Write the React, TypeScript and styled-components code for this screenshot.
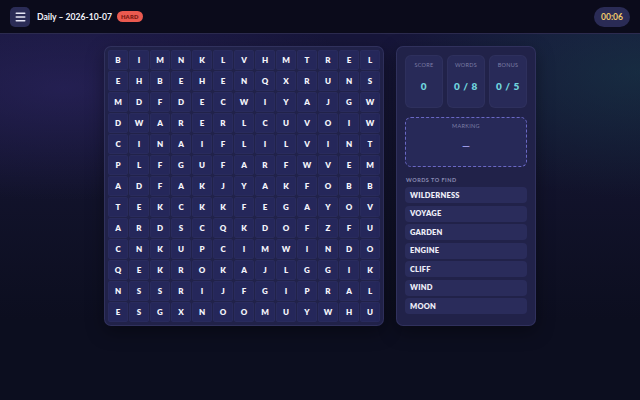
import React from 'react';
import styled, { createGlobalStyle } from 'styled-components';

const GlobalStyle = createGlobalStyle`
  html, body {
    margin: 0;
    padding: 0;
    height: 100%;
  }
  body {
    font-family: 'Lato', 'Noto Sans', sans-serif;
    background: #0c0e1f;
    color: #ffffff;
  }
  #root {
    min-height: 100%;
  }
`;

const Page = styled.div`
  width: 640px;
  height: 400px;
  overflow: hidden;
  background:
    radial-gradient(ellipse 420px 160px at 10% 22%, rgba(48, 40, 105, 0.55), transparent 70%),
    radial-gradient(ellipse 360px 180px at 100% 18%, rgba(24, 58, 72, 0.6), transparent 70%),
    linear-gradient(180deg, #17163a 9%, #12132c 45%, #0c0e1f 80%);
  display: flex;
  flex-direction: column;
`;

const Header = styled.header`
  height: 34px;
  box-sizing: border-box;
  padding: 0 10px;
  display: flex;
  align-items: center;
  justify-content: space-between;
  background: #0b0b1b;
  border-bottom: 1px solid #2c2b4f;
`;

const HeaderLeft = styled.div`
  display: flex;
  align-items: center;
  gap: 5px;
`;

const MenuButton = styled.button`
  width: 20px;
  height: 20px;
  border: none;
  border-radius: 5px;
  background: #2b2c56;
  display: flex;
  align-items: center;
  justify-content: center;
  padding: 0;
  margin-right: 2px;
`;

const Title = styled.h1`
  margin: 0;
  font-size: 8.6px;
  font-weight: 700;
  color: #f1f1f8;
`;

const Badge = styled.span`
  background: #ea5a50;
  color: #7a1812;
  font-size: 5.8px;
  font-weight: 800;
  line-height: 7px;
  padding: 2px 4px;
  border-radius: 6px;
  letter-spacing: 0.2px;
`;

const Timer = styled.div`
  background: #2a2b55;
  color: #f0c96a;
  font-size: 8.5px;
  font-weight: 700;
  height: 20px;
  width: 36px;
  border-radius: 10px;
  display: flex;
  align-items: center;
  justify-content: center;
`;

const Main = styled.main`
  display: flex;
  justify-content: center;
  align-items: stretch;
  gap: 12px;
  padding-top: 12px;
`;

const Panel = styled.section`
  background: #212249;
  border: 1px solid rgba(140, 140, 220, 0.14);
  border-radius: 7px;
  box-shadow: 0 6px 18px rgba(0, 0, 0, 0.35);
  box-sizing: border-box;
`;

const Board = styled(Panel)`
  padding: 3px;
  display: grid;
  grid-template-columns: repeat(13, 20px);
  grid-auto-rows: 20px;
  gap: 1px;
`;

const Cell = styled.div`
  display: flex;
  align-items: center;
  justify-content: center;
  background: #25275a;
  border-radius: 2px;
  font-size: 8px;
  font-weight: 800;
  color: #f4f4fb;
  box-shadow: inset 0 0 0 1px rgba(255, 255, 255, 0.02);
`;

const Side = styled(Panel)`
  width: 140px;
  padding: 8px 8px;
  display: flex;
  flex-direction: column;
`;

const Stats = styled.div`
  display: grid;
  grid-template-columns: repeat(3, 1fr);
  gap: 4px;
`;

const StatCard = styled.div`
  height: 53px;
  border-radius: 6px;
  background: #282a58;
  border: 1px solid rgba(255, 255, 255, 0.03);
  display: flex;
  flex-direction: column;
  align-items: center;
  padding-top: 6px;
  box-sizing: border-box;
`;

const StatLabel = styled.span`
  font-size: 5.5px;
  color: #7c7ea6;
  letter-spacing: 0.3px;
  text-transform: uppercase;
`;

const StatValue = styled.span`
  margin-top: 12px;
  font-size: 10px;
  font-weight: 800;
  color: #6fd3dc;
  letter-spacing: 0.6px;
`;

const Marking = styled.div`
  margin-top: 9px;
  height: 50px;
  box-sizing: border-box;
  border: 1px dashed #6a68c4;
  border-radius: 6px;
  background: #272958;
  display: flex;
  flex-direction: column;
  align-items: center;
  padding-top: 5px;
`;

const MarkingValue = styled.span`
  margin-top: 10px;
  font-size: 10px;
  color: #a9a6f0;
  font-weight: 700;
`;

const SectionLabel = styled.div`
  margin-top: 10px;
  margin-left: 1px;
  font-size: 5.5px;
  font-weight: 700;
  color: #8a8cb4;
  letter-spacing: 0.5px;
`;

const WordList = styled.ul`
  list-style: none;
  margin: 4px 0 0;
  padding: 0;
  display: flex;
  flex-direction: column;
  gap: 2.5px;
`;

const WordItem = styled.li`
  height: 16px;
  border-radius: 4px;
  background: #2a2c5b;
  display: flex;
  align-items: center;
  padding-left: 5px;
  font-size: 7.5px;
  font-weight: 800;
  color: #eeeef8;
  letter-spacing: 0.2px;
`;

const rows = [
  'BIMNKLVHMTREL',
  'EHBEHENQXRUNS',
  'MDFDECWIYAJGW',
  'DWARERLCUVOIW',
  'CINAIFLILVINT',
  'PLFGUFARFWVEM',
  'ADFAKJYAKFOBB',
  'TEKCKKFEGAYOV',
  'ARDSCQKDOFZFU',
  'CNKUPCIMWINDO',
  'QEKROKAJLGGIK',
  'NSSRIJFGIPRAL',
  'ESGXNOOMUYWHU',
];

const words = ['WILDERNESS', 'VOYAGE', 'GARDEN', 'ENGINE', 'CLIFF', 'WIND', 'MOON'];

const stats = [
  { label: 'Score', value: '0' },
  { label: 'Words', value: '0 / 8' },
  { label: 'Bonus', value: '0 / 5' },
];

const MenuIcon = () => (
  <svg width="11" height="10" viewBox="0 0 11 10">
    <rect x="0.5" y="0.5" width="10" height="1.6" rx="0.8" fill="#e6e6f5" />
    <rect x="0.5" y="4.2" width="10" height="1.6" rx="0.8" fill="#e6e6f5" />
    <rect x="0.5" y="7.9" width="10" height="1.6" rx="0.8" fill="#e6e6f5" />
  </svg>
);

const App = () => {
  return (
    <Page>
      <GlobalStyle />
      <Header>
        <HeaderLeft>
          <MenuButton aria-label="menu">
            <MenuIcon />
          </MenuButton>
          <Title>Daily – 2026-10-07</Title>
          <Badge>HARD</Badge>
        </HeaderLeft>
        <Timer>00:06</Timer>
      </Header>
      <Main>
        <Board>
          {rows.map((row, r) =>
            row.split('').map((ch, c) => <Cell key={`${r}-${c}`}>{ch}</Cell>)
          )}
        </Board>
        <Side>
          <Stats>
            {stats.map((s) => (
              <StatCard key={s.label}>
                <StatLabel>{s.label}</StatLabel>
                <StatValue>{s.value}</StatValue>
              </StatCard>
            ))}
          </Stats>
          <Marking>
            <StatLabel>Marking</StatLabel>
            <MarkingValue>—</MarkingValue>
          </Marking>
          <SectionLabel>WORDS TO FIND</SectionLabel>
          <WordList>
            {words.map((w) => (
              <WordItem key={w}>{w}</WordItem>
            ))}
          </WordList>
        </Side>
      </Main>
    </Page>
  );
};

export default App;
